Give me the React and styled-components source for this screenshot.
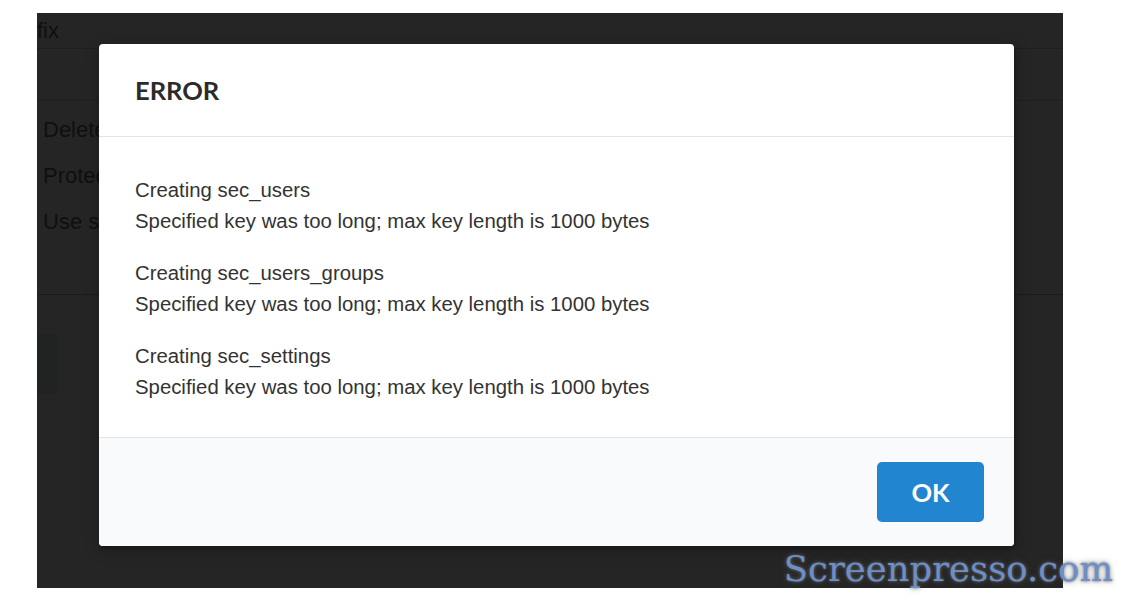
import React from 'react'
import styled, { createGlobalStyle } from 'styled-components'

const GlobalStyle = createGlobalStyle`
  html, body {
    margin: 0;
    padding: 0;
    background: #fff;
  }
`

const Page = styled.div`
  position: relative;
  width: 1142px;
  height: 605px;
  box-sizing: border-box;
  padding: 13px 0 0 37px;
  overflow: hidden;
`

const Frame = styled.div`
  position: relative;
  width: 1026px;
  height: 575px;
  overflow: hidden;
  background: #fff;
`

const BackPage = styled.div`
  font-family: 'Liberation Sans', Arial, sans-serif;
  font-size: 22px;
  color: #6a6a6a;
`

const BackRow = styled.div`
  height: ${(p) => p.h}px;
  box-sizing: border-box;
  line-height: ${(p) => p.h}px;
  border-bottom: 1px solid #d4d4d4;
`

const BackList = styled.ul`
  list-style: none;
  margin: 0;
  padding: 6px 0 49px 6px;
  border-bottom: 1px solid #bcbcbc;
`

const BackItem = styled.li`
  width: 56px;
  overflow: hidden;
  line-height: 46px;
  white-space: nowrap;
`

const BackButton = styled.div`
  margin: 39px 0 0 -80px;
  width: 101px;
  height: 60px;
  border-radius: 5px;
  background: #e4ebe7;
`

const Overlay = styled.div`
  position: absolute;
  inset: 0;
  background: rgba(0, 0, 0, 0.855);
  padding: 31px 49px 0 62px;
`

const Modal = styled.div`
  background: #fff;
  border-radius: 4px;
  overflow: hidden;
  box-shadow: 1px 3px 3px 0 rgba(0, 0, 0, 0.2), 1px 3px 15px 2px rgba(0, 0, 0, 0.2);
`

const Header = styled.div`
  height: 93px;
  box-sizing: border-box;
  display: flex;
  align-items: center;
  padding: 0 37px 0 36px;
  border-bottom: 1px solid #e4e4e4;
  font-family: Lato, 'Liberation Sans', sans-serif;
  font-weight: 700;
  font-size: 25.5px;
  color: #2b2b2b;
`

const Body = styled.div`
  padding: 38px 36px 34px;
  font-family: 'Liberation Sans', Arial, sans-serif;
  font-size: 20.35px;
  line-height: 31px;
  color: #333;
`

const Message = styled.p`
  margin: 0 0 21px;

  &:last-child {
    margin-bottom: 0;
  }
`

const Footer = styled.div`
  display: flex;
  justify-content: flex-end;
  padding: 24px 30px;
  background: #f9fafb;
  border-top: 1px solid #e2e3e5;
`

const OkButton = styled.button`
  width: 107px;
  height: 60px;
  border: none;
  border-radius: 5px;
  background: #2185d0;
  color: #fff;
  font-family: Lato, 'Liberation Sans', sans-serif;
  font-weight: 700;
  font-size: 25.5px;
  cursor: pointer;
`

const Watermark = styled.div`
  position: absolute;
  right: 29px;
  top: 549px;
  font-family: 'DejaVu Serif', 'Liberation Serif', serif;
  font-size: 35.4px;
  line-height: 40px;
  color: #6b8fc6;
  text-shadow: 0 0 3px rgba(110, 110, 110, 0.9), 0 0 6px rgba(90, 90, 90, 0.6);
`

const errors = ['sec_users', 'sec_users_groups', 'sec_settings']

export default function App() {
  return (
    <>
      <GlobalStyle />
      <Page>
        <Frame>
          <BackPage>
            <BackRow h={36}>fix</BackRow>
            <BackRow h={52} />
            <BackList>
              <BackItem>Delete</BackItem>
              <BackItem>Protect</BackItem>
              <BackItem>Use settings</BackItem>
            </BackList>
            <BackButton />
          </BackPage>
          <Overlay>
            <Modal>
              <Header>ERROR</Header>
              <Body>
                {errors.map((table) => (
                  <Message key={table}>
                    Creating {table}
                    <br />
                    Specified key was too long; max key length is 1000 bytes
                  </Message>
                ))}
              </Body>
              <Footer>
                <OkButton>OK</OkButton>
              </Footer>
            </Modal>
          </Overlay>
        </Frame>
        <Watermark>Screenpresso.com</Watermark>
      </Page>
    </>
  )
}
